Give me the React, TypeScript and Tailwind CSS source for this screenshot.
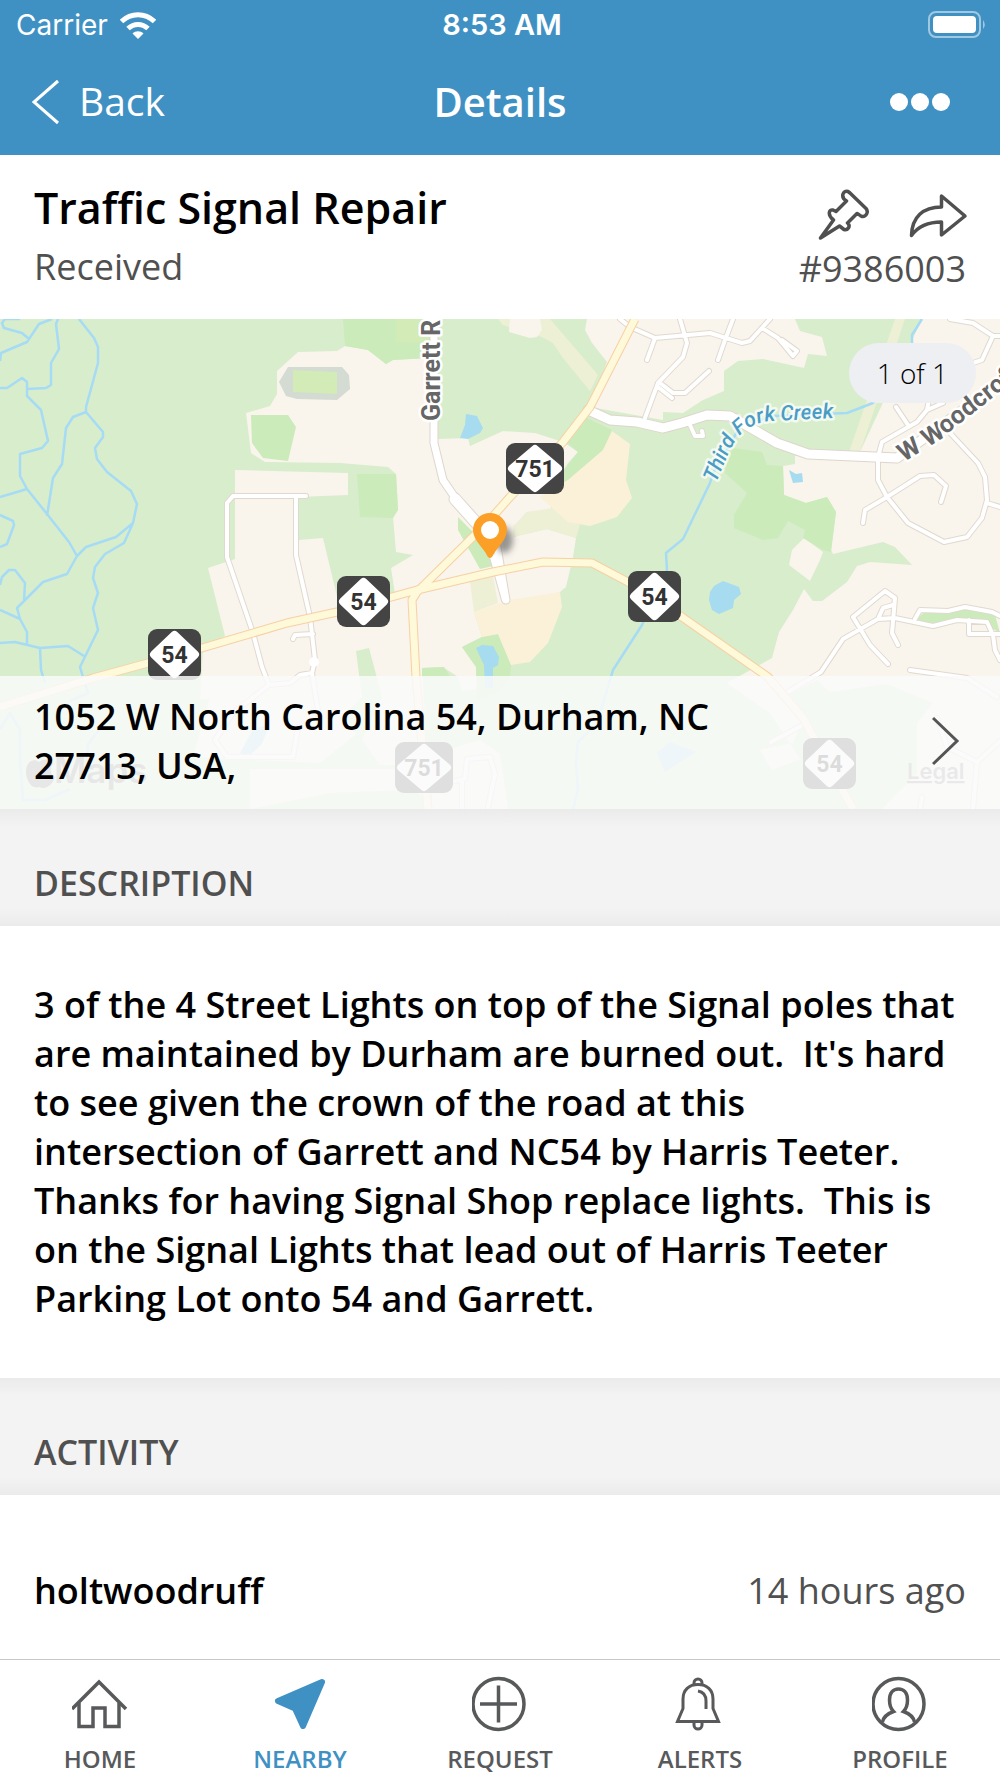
import React, { useState } from "react";

const strokeProps = {
  fill: "none",
  stroke: "currentColor",
  strokeWidth: 3.5,
};

const HomeIcon = () => (
  <svg viewBox="0 0 56 56" className="size-14" aria-hidden="true">
    <g {...strokeProps}>
      <path d="M0 33L27 6L54 33" />
      <path d="M7 27V50.500H21V32H33V50.500H47V27" />
    </g>
  </svg>
);

const NearbyIcon = () => (
  <svg viewBox="0 0 56 56" className="size-14" aria-hidden="true">
    <path
      d="M50 6L6 25L23 32.500L31 50Z"
      fill="currentColor"
      stroke="currentColor"
      strokeWidth="6"
      strokeLinejoin="round"
    />
  </svg>
);

const RequestIcon = () => (
  <svg viewBox="0 0 56 56" className="size-14" aria-hidden="true">
    <g {...strokeProps}>
      <circle cx="26.500" cy="28" r="25.500" />
      <path d="M8 28H45M26.500 9.500V46.500" />
    </g>
  </svg>
);

const AlertsIcon = () => (
  <svg viewBox="2 0 56 56" className="size-14" aria-hidden="true">
    <g {...strokeProps} strokeWidth="3">
      <path d="M7.500 45.500H48.500L43 32.500V23C43 14 37 8.500 28 8.500S13 14 13 23V32.500Z" />
      <path d="M24 9V7A4 4 0 0 1 32 7V9" />
      <path d="M24 46V49A4 4 0 0 0 32 49V46" />
      <path d="M28 15C34 16 36 20 36 25V33" />
    </g>
  </svg>
);

const ProfileIcon = () => (
  <svg viewBox="0 0 56 56" className="size-14" aria-hidden="true">
    <g {...strokeProps}>
      <circle cx="26.500" cy="28" r="25.500" />
      <path d="M10.500 46C11.500 41 14.500 38 21.500 35.500C18 32 17.500 28 17.500 24C17.500 17 21 13 26.500 13S35.500 17 35.500 24C35.500 28 35 32 31.500 35.500C38.500 38 41.500 41 42.500 46" />
    </g>
  </svg>
);

const PinIcon = () => (
  <svg viewBox="0 0 56 56" className="size-14" aria-hidden="true">
    <path
      {...strokeProps}
      strokeLinejoin="round"
      d="M6.500 52L19.500 34C13 29 15 23 19 24L22 25.500L32.500 15C26 11 29 4 34 5.500L36 7L52 22.500C55 26 52 31 48 30.500C46 30 45 28 43 27.500L33.500 37C37 40 34 44.500 30 43.500L25.500 40Z"
    />
  </svg>
);

const ShareIcon = () => (
  <svg viewBox="0 0 58 56" className="h-14 w-[58px] overflow-visible" aria-hidden="true">
    <path
      {...strokeProps}
      strokeLinejoin="round"
      d="M3.500 49.500C4 31 15 21 33.500 21V10L57 30L33.500 49V36C21 36 11 39 3.500 49.500Z"
    />
  </svg>
);

const WifiIcon = () => (
  <svg viewBox="0 0 36 27" className="h-[27px] w-9" aria-hidden="true">
    <g fill="none" stroke="#fff" strokeWidth="5">
      <path d="M1.500 9.500C11 0.500 25 0.500 34.500 9.500" />
      <path d="M8 16.500C14 11 22 11 28 16.500" />
    </g>
    <path d="M12.500 21.500C15.500 18.500 20.500 18.500 23.500 21.500L18 27Z" fill="#fff" />
  </svg>
);

const BatteryIcon = () => (
  <svg viewBox="0 0 60 28" className="h-7 w-[60px]" aria-hidden="true">
    <rect x="1" y="1" width="51" height="25" rx="7" fill="none" stroke="#fff" strokeOpacity="0.5" strokeWidth="2" />
    <rect x="5" y="5" width="43" height="17" rx="4" fill="#fff" />
    <path d="M55 9Q58.500 13.500 55 18Z" fill="#fff" fillOpacity="0.5" />
  </svg>
);

type ShieldProps = { x: number; y: number; label: string };

const Shield = ({ x, y, label }: ShieldProps) => {
  const w = label.length > 2 ? 58 : 53;
  return (
    <g transform={`translate(${x} ${y})`}>
      <rect width={w} height="51" rx="9" fill="#444" />
      <path
        d={`M${w / 2} 6L${w - 6} 25.500L${w / 2} 45L6 25.500Z`}
        fill="#fff"
        stroke="#fff"
        strokeWidth="8"
        strokeLinejoin="round"
      />
      <text
        x={w / 2}
        y="34"
        textAnchor="middle"
        fill="#333"
        className="font-['Roboto'] text-[23px] font-bold"
      >
        {label}
      </text>
    </g>
  );
};

const shields: ShieldProps[] = [
  { x: 506, y: 124, label: "751" },
  { x: 337, y: 257, label: "54" },
  { x: 628, y: 252, label: "54" },
  { x: 148, y: 310, label: "54" },
  { x: 395, y: 423, label: "751" },
  { x: 803, y: 419, label: "54" },
];

const land = [
  "298,33 337,32 345,27 368,31 386,45 393,41 426,39 438,120 468,119 470,127 503,112 535,114 563,123 578,133 568,144 547,176 552,191 527,193 513,208 513,218 547,210 576,219 573,238 566,268 560,273 474,293 482,318 462,328 476,348 477,370 462,372 458,358 443,348 422,349 430,490 400,446 380,446 362,420 360,378 200,380 203,328 330,300 395,275 391,249 413,236 396,233 393,198 398,191 396,155 388,148 340,144 265,143 251,134 246,94 270,87 277,75 277,52",
  "235,151 348,154 348,176 298,178 299,221 323,219 340,290 410,300 400,380 320,444 193,438 213,368 203,328 225,317 208,249 235,240",
  "250,450 400,450 430,455 450,430 480,421 500,435 508,490 430,490 430,470 330,474 250,490",
  "587,0 585,11 592,24 607,43 590,88 663,101 663,93 683,94 703,81 724,72 724,52 738,42 763,40 804,49 808,35 827,37 822,18 800,12 795,0",
  "922,0 1000,0 1000,490 882,490 917,454 917,404 933,384 887,365 830,373 817,361 790,375 803,399 793,424 760,431 772,451 800,440 770,394 727,364 772,339 779,313 793,291 804,270 813,282 822,282 847,263 857,247 870,243 912,246 895,228 883,223 833,235 831,231 836,193 827,178 806,184 784,176 783,147 795,145 795,137 860,133",
  "804,219 823,233 820,241 810,262 789,246 792,231",
  "510,0 509,13 530,19 537,18 542,11 540,0",
];

const woods = [
  "343,0 345,27 368,31 386,45 393,41 430,39 430,0",
  "587,99 612,111 603,131 568,161 543,178 578,133 568,124",
  "357,155 396,155 398,191 393,199 360,198",
  "251,96 288,96 296,108 288,142 263,139 252,124",
  "733,129 762,133 767,146 783,147 784,176 806,184 827,178 836,193 831,233 823,231 803,219 805,211 788,202 778,219 763,221 734,209 734,196 747,174 725,154 727,141",
  "462,328 482,318 498,315 511,346 510,358 497,374 477,381 476,348",
  "422,349 444,348 451,359 422,359",
  "458,198 473,213 490,238 493,247 480,250 458,211",
  "916,301 924,293 965,290 995,296 1000,314 987,306 957,303 933,308",
];

const ponds = [
  "466,95 477,97 483,109 480,114 468,120 460,119 465,106",
  "789,151 796,155 802,154 803,163 793,164",
  "710,273 714,267 723,262 739,268 741,275 734,281 733,289 719,295 712,291 709,281",
  "476,329 482,326 493,327 499,338 498,346 493,349 493,369 485,369 484,346",
  "657,434 670,423 696,433 683,441 665,453",
  "240,434 252,412 270,404 262,425 248,438",
];

const creeks =
  "M0 42L1 34L27 23L39 5L52 0M20 0L5 0L2 4L4 9L22 14L29 20M58 0L56 5L59 30L51 44V66L46 69L27 70M0 69L7 69L22 59L27 63V77L41 91L48 122L42 129L20 135V157L27 170L47 195L69 223L77 237L67 255L43 263L17 289L20 300L27 313V326M0 178L27 170M79 0L94 19L98 28V44L86 88V93L103 113V118L95 129L97 140L107 153L131 172L137 185L133 204L116 218L86 228L77 237M133 204L124 224L105 235L95 248L93 259L98 274L93 289L98 311L80 348L83 358L88 374L70 382M86 93L73 98L66 109L62 145L53 159L47 197M0 196L13 202L14 206L7 225L0 228M0 291L20 300M0 266L2 258L9 251H15L25 264L24 282M0 324L15 323L40 329L68 327L84 337M40 329L41 351L45 364M0 410L10 394L20 411V441L23 481H45L70 470M100 410L88 425L86 450M922 0L912 16V40L873 84L847 94L773 97L740 108L713 154L710 164L683 220L666 234L667 251L642 306L613 351L597 404L578 423L576 444L578 471L573 490";

const lanes =
  "M306 177H233L227 184V238L253 314L262 348L269 366L233 394L215 421L227 438H293L298 408M296 177V236L310 298L315 341L312 354L320 404M313 315L295 316L293 320M269 366L290 364L300 356L312 354M620 0L630 8L655 19L710 14L742 24L750 22L770 0M655 19L647 41M680 0L687 24L683 38L658 64L645 99M658 68L672 79M660 64L673 74H685L709 52M733 0L725 21L718 41M762 9L778 19L793 37L797 32L782 21M690 106L695 117H703L702 112M950 0L973 4L993 17H1000M993 17L982 41L973 44M943 84L927 91L917 103L882 123L878 138V161L887 178L908 204L944 223L967 218L982 199L987 181L985 158L978 144L950 114M896 88L908 106M927 91L929 80M863 204L865 191L887 178L920 157L934 156L946 167L941 183M987 184L1000 188M788 373L821 353L843 320L878 300L895 299L933 307L957 301L987 303L993 316L995 331L1000 341M915 300L920 291L948 292L965 288L992 293L1000 297M888 345L870 326L853 298L885 272L895 279L892 314L898 326M878 300L883 289L893 286M969 301V315H1000M910 351L967 359L997 378M771 423L803 406M937 399L947 428L977 443L1000 422M977 443L973 490M922 478L920 490M455 462L465 460L467 440L490 438L495 455L488 488M462 462V490";

const avenues =
  "M588 91L610 101L637 103L663 109L682 104L707 96L730 97L777 124L808 135L897 139L1000 64";
const garrett = "M434 0V124L443 161L460 186L484 212L497 228L506 281";
const highways =
  "M635 0L590 88L563 123L510 178L487 204L417 273L412 281L416 358L428 490M0 388L93 359L148 344L202 329L287 304L337 293L417 271L493 253L543 243L592 244L628 263L682 298L768 358L803 399L853 490";

const MapView = () => (
  <svg
    viewBox="0 0 1000 490"
    preserveAspectRatio="xMidYMid slice"
    className="block h-[490px] w-full"
    role="img"
    aria-label="Map of the reported location"
  >
    <defs>
      <filter id="pinShadow" x="-50%" y="-50%" width="200%" height="200%">
        <feGaussianBlur stdDeviation="3" />
      </filter>
      <path id="creekLabel" d="M716 164L730 131Q744 104 771 102L880 97" />
      <path id="woodcroftLabel" d="M904 143L938 122L1030 49" />
    </defs>
    <rect width="1000" height="490" fill="#d8edcc" />
    <polygon points="498,0 503,6 542,18 553,24 563,39 590,72 598,56 550,0" fill="#eef0d6" />
    <polygon points="895,0 905,0 860,133 849,133" fill="#eef0d6" />
    {land.map((points) => (
      <polygon key={points} points={points} fill="#f9f4ec" />
    ))}
    {woods.map((points) => (
      <polygon key={points} points={points} fill="#cbebba" />
    ))}
    <polygon points="396,0 396,23 430,24 430,0" fill="#d2ebb7" />
    <polygon points="356,332 369,329 382,378 362,420 340,400 362,378" fill="#d8edcc" />
    <polygon points="288,48 342,48 349,56 350,70 337,81 297,80 286,77 279,63" fill="#d3dbd3" />
    <polygon points="293,51 337,53 337,75 293,73" fill="#d2ebb7" />
    <g fill="#eef0d6">
      <polygon points="553,189 580,206 576,219 547,210 513,218 513,208 527,193" />
      <polygon points="470,263 493,257 498,284 474,293" />
    </g>
    <g fill="#fbf1d9">
      <polygon points="612,112 630,125 626,161 632,179 617,198 590,207 568,203 540,178 568,161 603,131" />
      <polygon points="474,293 510,281 560,273 562,288 548,324 530,343 511,346 498,315 482,318" />
    </g>
    {ponds.map((points) => (
      <polygon key={points} points={points} fill="#a6dbf0" />
    ))}
    <g fill="none" strokeLinejoin="round">
      <path d={creeks} stroke="#a6dbf5" strokeWidth="2.500" />
      <g strokeLinecap="round">
        <path d={lanes} stroke="#e0d9d0" strokeWidth="6" />
        <path d={avenues} stroke="#ddd6cd" strokeWidth="11" />
        <path d={garrett} stroke="#ddd6cd" strokeWidth="9" />
        <path d="M455 180L480 208" stroke="#ddd6cd" strokeWidth="13" />
        <path d="M493 238L505 281" stroke="#ddd6cd" strokeWidth="8" />
        <path d={lanes} stroke="#fff" strokeWidth="4" />
        <path d={avenues} stroke="#fff" strokeWidth="9" />
        <path d={garrett} stroke="#fff" strokeWidth="7" />
        <path d="M455 180L480 208" stroke="#fff" strokeWidth="11" />
        <path d="M493 238L505 281" stroke="#fff" strokeWidth="6" />
      </g>
      <path d={highways} stroke="#f7d0a4" strokeWidth="9" />
      <path d={highways} stroke="#fdf9d9" strokeWidth="7" />
    </g>
    <circle cx="314" cy="343" r="5" fill="#fff" />
    <g
      className="font-['Roboto'] font-medium"
      stroke="#fff"
      strokeWidth="5"
      strokeLinejoin="round"
      paintOrder="stroke"
    >
      <text transform="translate(440 102) rotate(-90)" fill="#666" className="text-[25px] font-bold">
        Garrett Rd
      </text>
      <text fill="#4a9cc4" strokeOpacity="0.7" className="text-[21px] italic">
        <textPath href="#creekLabel">Third Fork Creek</textPath>
      </text>
      <text fill="#666" className="text-[25px] font-bold">
        <textPath href="#woodcroftLabel">W Woodcroft Pkwy</textPath>
      </text>
    </g>
    {shields.map((shield) => (
      <Shield key={`${shield.x}-${shield.y}`} {...shield} />
    ))}
    <ellipse cx="504" cy="221" rx="9" ry="13" fill="#555" fillOpacity="0.6" filter="url(#pinShadow)" />
    <path
      d="M490 239C488 239 487 236 485 233C480 226 473 219 473 211A17 17 0 0 1 507 211C507 219 500 226 495 233C493 236 492 239 490 239Z"
      fill="#fb9f27"
    />
    <circle cx="490" cy="211" r="9" fill="#fff" />
    <path
      d="M39 443C44 439 52 440 53 445C49 449 50 456 55 458C52 466 47 471 39 468C31 471 26 460 26 453C26 442 34 439 39 443Z"
      fill="#777"
    />
    <text x="54" y="464" fill="#777" className="font-['Inter'] text-[35px] font-semibold">
      Maps
    </text>
    <a href="#legal">
      <text x="907" y="460" fill="#888" className="font-['Inter'] text-[22px] font-semibold underline">
        Legal
      </text>
    </a>
  </svg>
);

const SectionHeader = ({ title }: { title: string }) => (
  <h2 className="bg-[#f3f3f3] bg-[linear-gradient(to_bottom,#ebebeb,#f3f3f3_18px,#f3f3f3_calc(100%-18px),#ebebeb)] px-[34px] pt-[50px] pb-[19px] text-[34px] leading-[48px] font-semibold text-[#505050]">
    {title}
  </h2>
);

const tabs = [
  { name: "HOME", icon: HomeIcon },
  { name: "NEARBY", icon: NearbyIcon },
  { name: "REQUEST", icon: RequestIcon },
  { name: "ALERTS", icon: AlertsIcon },
  { name: "PROFILE", icon: ProfileIcon },
];

const App = () => {
  const [activeTab, setActiveTab] = useState("NEARBY");

  return (
    <div className="flex min-h-screen flex-col bg-white font-['Open_Sans',sans-serif] text-black">
      <header className="bg-[#4091c3] text-white">
        <div className="grid h-[50px] grid-cols-[1fr_auto_1fr] items-center pr-3 pl-4 font-['Inter',sans-serif] text-[28px]">
          <div className="flex items-center gap-3">
            <span>Carrier</span>
            <WifiIcon />
          </div>
          <span className="text-[29px] font-semibold">8:53 AM</span>
          <div className="flex justify-end">
            <BatteryIcon />
          </div>
        </div>
        <div className="grid h-[105px] grid-cols-[1fr_auto_1fr] items-center px-8 pb-0.5">
          <button type="button" className="flex items-center gap-5 text-[39px]">
            <svg viewBox="0 0 27 46" className="h-[46px] w-[27px]" aria-hidden="true">
              <path d="M26 2L2 23L26 44" fill="none" stroke="#fff" strokeWidth="3" />
            </svg>
            Back
          </button>
          <h1 className="text-[40px] font-semibold">Details</h1>
          <button type="button" aria-label="More" className="flex justify-end gap-[3px] pr-[18px]">
            <span className="size-[18px] rounded-full bg-white" />
            <span className="size-[18px] rounded-full bg-white" />
            <span className="size-[18px] rounded-full bg-white" />
          </button>
        </div>
      </header>

      <main className="flex-1">
        <section className="flex justify-between px-[34px] pt-[23px] pb-[26px]">
          <div>
            <h2 className="text-[43px] leading-[60px] font-semibold">Traffic Signal Repair</h2>
            <p className="mt-1 text-[36px] leading-[49px] text-[#505050]">Received</p>
          </div>
          <div className="flex flex-col items-end gap-0.5 pt-2 text-[#505050]">
            <div className="flex gap-[38px]">
              <button type="button" aria-label="Pin">
                <PinIcon />
              </button>
              <button type="button" aria-label="Share">
                <ShareIcon />
              </button>
            </div>
            <p className="text-[36px] leading-[49px]">#9386003</p>
          </div>
        </section>

        <section className="relative">
          <MapView />
          <span className="absolute top-6 right-6 rounded-full bg-[#edeff3] px-7 text-[28px] leading-[60px] font-light">
            1 of 1
          </span>
          <button
            type="button"
            className="absolute inset-x-0 bottom-0 flex items-center bg-[#fafafa]/85 px-[34px] pt-4 pb-[19px] text-left text-[36px] leading-[49px] font-semibold"
          >
            <span className="flex-1 pr-32">1052 W North Carolina 54, Durham, NC 27713, USA,</span>
            <svg viewBox="0 0 34 50" className="h-[50px] w-[34px]" aria-hidden="true">
              <path d="M1 2L25 25L1 48" fill="none" stroke="#555" strokeWidth="3" />
            </svg>
          </button>
        </section>

        <SectionHeader title="DESCRIPTION" />
        <p className="pt-[54px] pr-10 pb-[55px] pl-[34px] text-[36px] leading-[49px] font-semibold whitespace-pre-wrap">
          {"3 of the 4 Street Lights on top of the Signal poles that are maintained by Durham are burned out.  It's hard to see given the crown of the road at this intersection of Garrett and NC54 by Harris Teeter.  Thanks for having Signal Shop replace lights.  This is on the Signal Lights that lead out of Harris Teeter Parking Lot onto 54 and Garrett."}
        </p>

        <SectionHeader title="ACTIVITY" />
        <div className="flex justify-between px-[34px] pt-[71px] pb-11 text-[36px] leading-[49px]">
          <span className="font-semibold">holtwoodruff</span>
          <span className="text-[#505050]">14 hours ago</span>
        </div>
      </main>

      <nav className="sticky bottom-0 grid grid-cols-5 border-t border-[#c8c8c8] bg-white pt-4 pb-0.5">
        {tabs.map(({ name, icon: Icon }) => (
          <button
            key={name}
            type="button"
            onClick={() => setActiveTab(name)}
            className={`flex flex-col items-center gap-2.5 text-[24px] leading-[34px] font-semibold ${
              activeTab === name ? "text-[#4091c3]" : "text-[#58595b]"
            }`}
          >
            <Icon />
            {name}
          </button>
        ))}
      </nav>
    </div>
  );
};

export default App;
